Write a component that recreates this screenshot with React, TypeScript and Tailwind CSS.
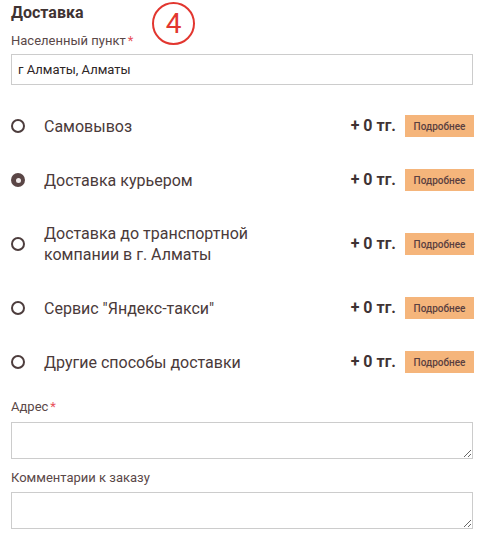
import { useState } from "react";

const options = [
  { id: "pickup", label: "Самовывоз" },
  { id: "courier", label: "Доставка курьером" },
  { id: "transport", label: "Доставка до транспортной компании в г. Алматы" },
  { id: "yandex", label: 'Сервис "Яндекс-такси"' },
  { id: "other", label: "Другие способы доставки" },
];

function Radio({ checked }: { checked: boolean }) {
  if (checked) {
    return (
      <span className="flex h-[14px] w-[14px] items-center justify-center rounded-full bg-[#5a4646]">
        <span className="h-[5px] w-[5px] rounded-full bg-[#f2ecec]" />
      </span>
    );
  }
  return <span className="block h-[14px] w-[14px] rounded-full border-2 border-[#4d3d3d]" />;
}

export default function App() {
  const [selected, setSelected] = useState("courier");

  return (
    <div className="min-h-[538px] w-[485px] bg-white px-[11px] font-['Roboto',sans-serif] text-[#4a3a3a]">
      <div className="relative">
        <h2 className="pt-[3px] text-[16px] font-bold leading-[20px] text-[#3f3333]">Доставка</h2>
        <div className="absolute left-[141px] top-[2px] flex h-[43px] w-[43px] items-center justify-center rounded-full border-[2.5px] border-[#e2362f] text-[28px] leading-none text-[#e2362f]">
          4
        </div>
      </div>

      <label className="mt-[10px] block text-[13px] leading-[16px] text-[#5a4848]">
        Населенный пункт<span className="ml-[2px] text-[#e8505b]">*</span>
      </label>
      <input
        defaultValue="г Алматы, Алматы"
        className="mt-[5px] block h-[31px] w-[462px] border border-[#cccccc] px-[6px] text-[13px] text-[#2e2626] outline-none"
      />

      <div className="mt-[14px]">
        {options.map((o) => (
          <div
            key={o.id}
            onClick={() => setSelected(o.id)}
            className="flex cursor-pointer items-center py-[16px]"
          >
            <div className="w-[33px]">
              <Radio checked={selected === o.id} />
            </div>
            <div className="w-[230px] text-[16px] leading-[21px]">{o.label}</div>
            <div className="ml-auto flex items-center">
              <span className="text-[16px] font-bold leading-[20px] text-[#3f3333]">+ 0 тг.</span>
              <button className="ml-[9px] h-[22px] w-[69px] bg-[#f5b57b] text-[10px] font-medium text-[#5a4040]">
                Подробнее
              </button>
            </div>
          </div>
        ))}
      </div>

      <label className="mt-[10px] block text-[13px] leading-[16px] text-[#5a4848]">
        Адрес<span className="ml-[2px] text-[#e8505b]">*</span>
      </label>
      <textarea className="mt-[7px] block h-[37px] w-[462px] border border-[#cccccc] outline-none" />

      <label className="mt-[11px] block text-[13px] leading-[16px] text-[#5a4848]">
        Комментарии к заказу
      </label>
      <textarea className="mt-[6px] block h-[37px] w-[462px] border border-[#cccccc] outline-none" />
    </div>
  );
}
